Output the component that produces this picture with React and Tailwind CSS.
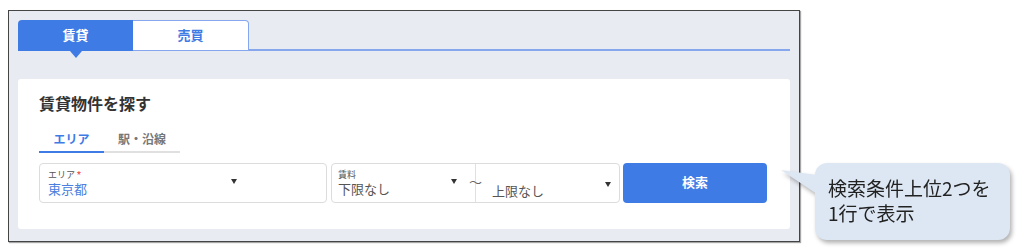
import React from "react";

const Caret = () => (
  <svg width="6" height="5" viewBox="0 0 6 5" className="shrink-0">
    <path d="M0 0 L6 0 L3 5 Z" fill="#333" />
  </svg>
);

export default function App() {
  return (
    <div
      className="w-[1024px] h-[252px] bg-white flex items-start overflow-hidden"
      style={{ fontFamily: 'Roboto, "Noto Sans CJK JP", sans-serif' }}
    >
      {/* Frame */}
      <div className="ml-[8px] mt-[10px] w-[792px] h-[232px] border border-[#444] bg-[#e9ebf2] pl-[9px] pr-[9px] pt-[9px] shadow-[1px_1px_1px_rgba(0,0,0,0.35)] shrink-0">
        {/* Tabs */}
        <div className="flex items-end h-[31px] border-b-2 border-[#86a6ee]">
          <div className="relative w-[115px] h-[31px] -mb-[2px] bg-[#3e7be5] rounded-tl-[4px] flex items-center justify-center text-white text-[13px] font-bold">
            賃貸
            <div className="absolute left-1/2 -translate-x-1/2 top-full w-0 h-0 border-l-[6px] border-r-[6px] border-t-[7px] border-l-transparent border-r-transparent border-t-[#3e7be5]" />
          </div>
          <div className="w-[116px] h-[31px] -mb-[2px] bg-white border border-[#86a6ee] border-l-0 rounded-tr-[4px] flex items-center justify-center text-[#3e7be5] text-[13px] font-bold">
            売買
          </div>
        </div>

        {/* Card */}
        <div className="mt-[28px] h-[150px] bg-white rounded-[3px] pl-[21px] pr-[22px] pt-[16px]">
          <div className="text-[16px] leading-[20px] font-bold text-[#333]">賃貸物件を探す</div>

          <div className="mt-[13px] flex w-[141px]">
            <div className="w-[65px] h-[25px] border-b-2 border-[#3e7be5] flex items-center justify-center text-[12px] font-bold text-[#3e7be5]">
              エリア
            </div>
            <div className="w-[76px] h-[25px] border-b-2 border-[#e0e0e0] flex items-center justify-center text-[12px] font-bold text-[#777]">
              駅・沿線
            </div>
          </div>

          <div className="mt-[10px] flex h-[40px]">
            {/* Area */}
            <div className="w-[288px] h-[40px] border border-[#dcdcdc] rounded-[4px] pl-[8px] flex items-center">
              <div className="w-[183px] flex flex-col">
                <div className="text-[9px] leading-[10px] text-[#555] mt-[1px]">
                  エリア<span className="text-[#e33] ml-[2px]">*</span>
                </div>
                <div className="text-[13px] leading-[16px] text-[#4a80e0] mt-[2px]">東京都</div>
              </div>
              <div className="mt-[-3px]">
                <Caret />
              </div>
            </div>

            {/* Rent */}
            <div className="relative ml-[4px] w-[289px] h-[40px] border border-[#dcdcdc] rounded-[4px] flex">
              <div className="w-[144px] h-full pl-[6px] pr-[18px] flex items-center justify-between border-r border-[#e0e0e0]">
                <div className="flex flex-col">
                  <div className="text-[9px] leading-[10px] text-[#555] mt-[1px]">賃料</div>
                  <div className="text-[13px] leading-[16px] text-[#555] mt-[2px]">下限なし</div>
                </div>
                <div className="mt-[-3px]">
                  <Caret />
                </div>
              </div>
              <div className="flex-1 h-full pl-[16px] pr-[8px] flex items-center justify-between">
                <div className="text-[13px] leading-[16px] text-[#555] mt-[17px]">上限なし</div>
                <div className="mt-[2px]">
                  <Caret />
                </div>
              </div>
              <div className="absolute left-[137px] top-[11px] text-[13px] leading-[16px] text-[#666]">〜</div>
            </div>

            {/* Button */}
            <div className="ml-[3px] w-[144px] h-[40px] bg-[#3e7be5] rounded-[4px] flex items-center justify-center text-white text-[13px] font-bold">
              検索
            </div>
          </div>
        </div>
      </div>

      {/* Callout */}
      <div className="relative ml-[15px] mt-[163px] w-[195px] h-[77px] shrink-0 drop-shadow-[2px_3px_2px_rgba(0,0,0,0.3)]">
        <svg className="absolute left-[-34px] top-[6px]" width="36" height="26" viewBox="0 0 36 26">
          <path d="M0 1 L36 6 L36 25 Z" fill="#dce7f3" />
        </svg>
        <div
          className="w-full h-full bg-[#dce7f3] rounded-[12px] pl-[13px] pt-[12px] text-[19px] leading-[25px] text-[#222]"
          style={{ fontFamily: '"Noto Sans CJK JP", sans-serif' }}
        >
          検索条件上位2つを
          <br />
          1行で表示
        </div>
      </div>
    </div>
  );
}
